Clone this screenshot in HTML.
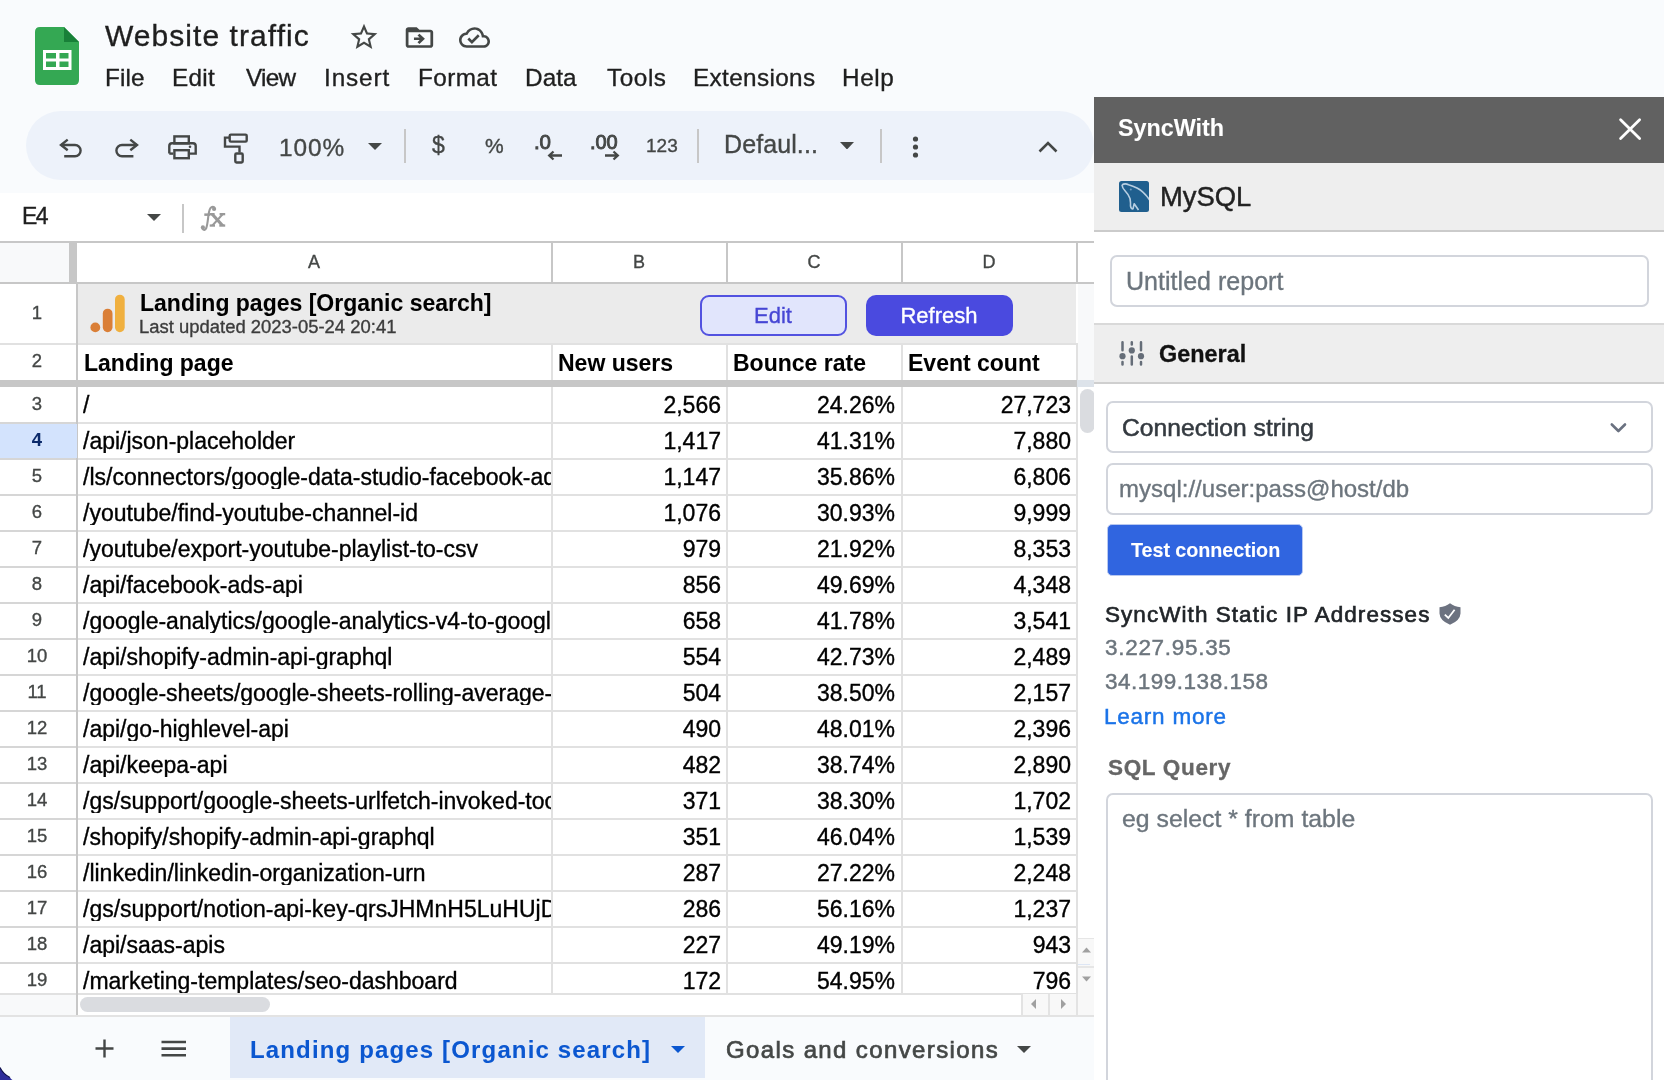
<!DOCTYPE html>
<html><head><meta charset="utf-8"><title>Website traffic</title>
<style>
html,body{margin:0;padding:0;}
body{width:1664px;height:1080px;position:relative;overflow:hidden;background:#f9fbfd;font-family:"Liberation Sans", sans-serif;}
div{will-change:transform;-webkit-text-stroke:0.35px currentColor;}
</style></head><body>
<div style="position:absolute;left:0px;top:0px;width:1664px;height:193px;background:#f9fbfd;"></div>
<div style="position:absolute;left:0px;top:193px;width:1094px;height:49px;background:#ffffff;"></div>
<div style="position:absolute;left:26px;top:111px;width:1068px;height:69px;background:#edf2fa;border-radius:35px;"></div>
<svg style="position:absolute;left:35px;top:27px" width="44" height="58" viewBox="0 0 44 58">
<path d="M0 5 Q0 0 5 0 H29 L44 15 V53 Q44 58 39 58 H5 Q0 58 0 53 Z" fill="#34a853"/>
<path d="M29 0 L44 15 H29 Z" fill="#188038"/>
<rect x="8" y="23" width="28.5" height="20" fill="#fff"/>
<rect x="11" y="26" width="10" height="5.5" fill="#34a853"/>
<rect x="24.5" y="26" width="9" height="5.5" fill="#34a853"/>
<rect x="11" y="34.5" width="10" height="5.5" fill="#34a853"/>
<rect x="24.5" y="34.5" width="9" height="5.5" fill="#34a853"/>
</svg>
<div style="position:absolute;top:20.61px;font-size:30px;line-height:30px;font-weight:400;color:#1f1f1f;white-space:nowrap;letter-spacing:1.057px;left:104.6px;">Website traffic</div>
<svg style="position:absolute;left:347.6px;top:21px" width="32" height="32" viewBox="0 0 24 24"><path fill="#444746" d="M22 9.24l-7.19-.62L12 2 9.19 8.63 2 9.24l5.46 4.73L5.82 21 12 17.27 18.18 21l-1.63-7.03L22 9.24zM12 15.4l-3.76 2.27 1-4.28-3.32-2.88 4.38-.38L12 6.1l1.71 4.04 4.38.38-3.32 2.88 1 4.28L12 15.4z"/></svg>
<svg preserveAspectRatio="none" style="position:absolute;left:402.7px;top:21.8px" width="32.9" height="31.05" viewBox="0 0 24 24"><path fill="#444746" d="M20 6h-8l-2-2H4c-1.1 0-2 .9-2 2v12c0 1.1.9 2 2 2h16c1.1 0 2-.9 2-2V8c0-1.1-.9-2-2-2zm0 12H4V8h16v10z"/><path fill="#444746" d="M11.99 9l-1.41 1.41L12.16 12H8v2h4.16l-1.59 1.59L11.99 17 16 13.01z"/></svg>
<svg style="position:absolute;left:459px;top:22px" width="31" height="31" viewBox="0 0 24 24"><path fill="#444746" d="M19.35 10.04C18.67 6.59 15.64 4 12 4 9.11 4 6.6 5.64 5.35 8.04 2.34 8.36 0 10.91 0 14c0 3.31 2.69 6 6 6h13c2.76 0 5-2.24 5-5 0-2.64-2.05-4.78-4.65-4.96zM19 18H6c-2.21 0-4-1.79-4-4 0-2.05 1.53-3.76 3.56-3.97l1.07-.11.5-.95C8.08 7.14 9.94 6 12 6c2.62 0 4.88 1.86 5.39 4.43l.3 1.5 1.53.11c1.56.1 2.78 1.41 2.78 2.96 0 1.65-1.35 3-3 3zm-9-3.82l-2.09-2.09L6.5 13.5 10 17l6.01-6.01-1.41-1.41z"/></svg>
<div style="position:absolute;top:65.73px;font-size:24.3px;line-height:24.3px;font-weight:400;color:#1f1f1f;white-space:nowrap;letter-spacing:0.13299999999999998px;left:105.0px;">File</div>
<div style="position:absolute;top:65.73px;font-size:24.3px;line-height:24.3px;font-weight:400;color:#1f1f1f;white-space:nowrap;letter-spacing:0.3px;left:171.5px;">Edit</div>
<div style="position:absolute;top:65.73px;font-size:24.3px;line-height:24.3px;font-weight:400;color:#1f1f1f;white-space:nowrap;letter-spacing:-0.7px;left:245.5px;">View</div>
<div style="position:absolute;top:65.73px;font-size:24.3px;line-height:24.3px;font-weight:400;color:#1f1f1f;white-space:nowrap;letter-spacing:0.8799999999999999px;left:323.6px;">Insert</div>
<div style="position:absolute;top:65.73px;font-size:24.3px;line-height:24.3px;font-weight:400;color:#1f1f1f;white-space:nowrap;letter-spacing:0.4px;left:417.8px;">Format</div>
<div style="position:absolute;top:65.73px;font-size:24.3px;line-height:24.3px;font-weight:400;color:#1f1f1f;white-space:nowrap;letter-spacing:0.09899999999999998px;left:525.1999999999999px;">Data</div>
<div style="position:absolute;top:65.73px;font-size:24.3px;line-height:24.3px;font-weight:400;color:#1f1f1f;white-space:nowrap;letter-spacing:0.575px;left:607.0px;">Tools</div>
<div style="position:absolute;top:65.73px;font-size:24.3px;line-height:24.3px;font-weight:400;color:#1f1f1f;white-space:nowrap;letter-spacing:0.366px;left:692.6999999999999px;">Extensions</div>
<div style="position:absolute;top:65.73px;font-size:24.3px;line-height:24.3px;font-weight:400;color:#1f1f1f;white-space:nowrap;letter-spacing:0.6px;left:842.1px;">Help</div>
<svg style="position:absolute;left:55px;top:130px" width="90" height="35" viewBox="0 0 90 35">
<path d="M12.7 9.6 L6 15 L12.7 20.2" stroke="#444746" stroke-width="2.4" fill="none" stroke-linejoin="miter"/>
<path d="M6 15 H20 A5.6 5.6 0 0 1 20 26.2 H9.2" stroke="#444746" stroke-width="2.4" fill="none"/>
<path d="M75.3 9.6 L82 15 L75.3 20.2" stroke="#444746" stroke-width="2.4" fill="none"/>
<path d="M82 15 H67 A5.6 5.6 0 0 0 67 26.2 H78.4" stroke="#444746" stroke-width="2.4" fill="none"/>
</svg>
<svg style="position:absolute;left:165px;top:130px" width="35" height="35" viewBox="0 0 35 35">
<rect x="9.4" y="6.4" width="14.4" height="7" stroke="#444746" stroke-width="2.4" fill="none"/>
<path d="M4.3 23.6 V16 Q4.3 13.3 7 13.3 H28 Q30.7 13.3 30.7 16 V23.6 H24.7" stroke="#444746" stroke-width="2.4" fill="none"/>
<path d="M8.2 23.6 H4.3" stroke="#444746" stroke-width="2.4" fill="none"/>
<rect x="9.4" y="20.2" width="14.4" height="8" stroke="#444746" stroke-width="2.4" fill="none"/>
<circle cx="25" cy="16.8" r="1.3" fill="#444746"/>
</svg>
<svg style="position:absolute;left:220px;top:130px" width="35" height="35" viewBox="0 0 35 35">
<rect x="9.7" y="4.6" width="17" height="7" rx="1.2" stroke="#444746" stroke-width="2.4" fill="none"/>
<path d="M9.7 7.6 H5 V16.6 H19.5 V22.5" stroke="#444746" stroke-width="2.4" fill="none"/>
<rect x="15.3" y="23.5" width="7.4" height="9" rx="1.2" stroke="#444746" stroke-width="2.4" fill="none"/>
</svg>
<div style="position:absolute;top:136.35px;font-size:24.4px;line-height:24.4px;font-weight:400;color:#444746;white-space:nowrap;letter-spacing:0.9px;left:279.2px;">100%</div>
<svg style="position:absolute;left:367.5px;top:142.5px" width="14" height="7" viewBox="0 0 14 7"><path d="M0 0 H14 L7.0 7 Z" fill="#444746"/></svg>
<div style="position:absolute;left:403.5px;top:128.5px;width:2px;height:34px;background:#c7c7c7;"></div>
<div style="position:absolute;top:133.53px;font-size:23px;line-height:23px;font-weight:400;color:#444746;white-space:nowrap;left:432px;">$</div>
<div style="position:absolute;top:135.22px;font-size:21px;line-height:21px;font-weight:400;color:#444746;white-space:nowrap;left:484.6px;">%</div>
<div style="position:absolute;top:131.65px;font-size:20.5px;line-height:20.5px;font-weight:400;color:#444746;white-space:nowrap;letter-spacing:-0.2px;left:533.8px;-webkit-text-stroke:0.9px currentColor;">.0</div>
<svg style="position:absolute;left:547px;top:150px" width="18" height="12" viewBox="0 0 18 12"><path d="M2 5.5 H15 M6.5 1.5 L2.2 5.5 L6.5 9.5" stroke="#444746" stroke-width="2.3" fill="none"/></svg>
<div style="position:absolute;top:132.07px;font-size:20px;line-height:20px;font-weight:400;color:#444746;white-space:nowrap;letter-spacing:-0.1px;left:589.5px;-webkit-text-stroke:0.9px currentColor;">.00</div>
<svg style="position:absolute;left:602px;top:150px" width="18" height="12" viewBox="0 0 18 12"><path d="M16 5.5 H3 M11.5 1.5 L15.8 5.5 L11.5 9.5" stroke="#444746" stroke-width="2.3" fill="none"/></svg>
<div style="position:absolute;top:136.22px;font-size:19px;line-height:19px;font-weight:400;color:#444746;white-space:nowrap;left:645.5px;">123</div>
<div style="position:absolute;left:696.5px;top:128.5px;width:2px;height:34px;background:#c7c7c7;"></div>
<div style="position:absolute;top:131.84px;font-size:25px;line-height:25px;font-weight:400;color:#444746;white-space:nowrap;letter-spacing:0.1px;left:723.7px;">Defaul...</div>
<svg style="position:absolute;left:840px;top:141.5px" width="14" height="7.5" viewBox="0 0 14 7.5"><path d="M0 0 H14 L7.0 7.5 Z" fill="#444746"/></svg>
<div style="position:absolute;left:880px;top:128.5px;width:2px;height:34px;background:#c7c7c7;"></div>
<svg style="position:absolute;left:910px;top:136px" width="12" height="22" viewBox="0 0 12 22"><circle cx="5.5" cy="3" r="2.6" fill="#444746"/><circle cx="5.5" cy="11" r="2.6" fill="#444746"/><circle cx="5.5" cy="19" r="2.6" fill="#444746"/></svg>
<svg style="position:absolute;left:1036px;top:138px" width="24" height="18" viewBox="0 0 24 18"><path d="M3.5 13.5 L12 5 L20.5 13.5" stroke="#444746" stroke-width="2.6" fill="none"/></svg>
<div style="position:absolute;top:205.13px;font-size:23px;line-height:23px;font-weight:400;color:#1f1f1f;white-space:nowrap;letter-spacing:-1.6px;left:21.5px;">E4</div>
<svg style="position:absolute;left:146.8px;top:214px" width="14" height="7" viewBox="0 0 14 7"><path d="M0 0 H14 L7.0 7 Z" fill="#444746"/></svg>
<div style="position:absolute;left:181.5px;top:204px;width:2px;height:29px;background:#c7c7c7;"></div>
<svg style="position:absolute;left:199px;top:204px" width="28" height="28" viewBox="0 0 28 28"><g fill="#999999"><path d="M3.2 24.3 Q5.6 27.6 7.3 24 Q8.3 21 9.1 14 Q9.9 6.5 11.4 4.2 Q13.3 1.8 15.6 3.6" stroke="#999999" stroke-width="2.1" fill="none"/><circle cx="3.9" cy="23.4" r="2.1"/><circle cx="15.1" cy="4.9" r="2.1"/><rect x="5.3" y="9.4" width="5.9" height="2.5"/><path d="M11.4 10.5 L15.6 10.5 L25.6 21.6 L21.4 21.6 Z"/><path d="M22 10.5 L24.8 10.5 L14.8 21.6 L12 21.6 Z"/><rect x="10.7" y="9" width="4.9" height="2.3"/><rect x="20.6" y="9" width="5.6" height="2.3"/><rect x="10.7" y="20.4" width="5.3" height="2.3"/><rect x="20.3" y="20.4" width="5.9" height="2.3"/></g></svg>
<div style="position:absolute;left:0px;top:242px;width:1094px;height:41px;background:#ffffff;"></div>
<div style="position:absolute;left:0px;top:242px;width:69px;height:41px;background:#f8f9fa;"></div>
<div style="position:absolute;left:0px;top:241px;width:1094px;height:2px;background:#c7c7c7;"></div>
<div style="position:absolute;left:0px;top:282px;width:1094px;height:2px;background:#c7c7c7;"></div>
<div style="position:absolute;left:69px;top:243px;width:8px;height:41px;background:#c7c7c7;"></div>
<div style="position:absolute;top:253.46px;font-size:18px;line-height:18px;font-weight:400;color:#444746;white-space:nowrap;left:14.25px;width:600px;text-align:center;">A</div>
<div style="position:absolute;top:253.46px;font-size:18px;line-height:18px;font-weight:400;color:#444746;white-space:nowrap;left:339.0px;width:600px;text-align:center;">B</div>
<div style="position:absolute;top:253.46px;font-size:18px;line-height:18px;font-weight:400;color:#444746;white-space:nowrap;left:514.0px;width:600px;text-align:center;">C</div>
<div style="position:absolute;top:253.46px;font-size:18px;line-height:18px;font-weight:400;color:#444746;white-space:nowrap;left:689.0px;width:600px;text-align:center;">D</div>
<div style="position:absolute;left:551px;top:243px;width:2px;height:40px;background:#c7c7c7;"></div>
<div style="position:absolute;left:726px;top:243px;width:2px;height:40px;background:#c7c7c7;"></div>
<div style="position:absolute;left:901px;top:243px;width:2px;height:40px;background:#c7c7c7;"></div>
<div style="position:absolute;left:1076px;top:243px;width:2px;height:40px;background:#c7c7c7;"></div>
<div style="position:absolute;left:0px;top:284px;width:1094px;height:59px;background:#ffffff;"></div>
<div style="position:absolute;left:77px;top:284px;width:999px;height:59px;background:#ebebeb;"></div>
<div style="position:absolute;left:0px;top:343px;width:1094px;height:2px;background:#e1e1e1;"></div>
<div style="position:absolute;left:0px;top:345px;width:1094px;height:35px;background:#ffffff;"></div>
<div style="position:absolute;left:0px;top:380px;width:1077px;height:7px;background:#c7c7c7;"></div>
<div style="position:absolute;left:1077px;top:380px;width:17px;height:7px;background:#dde3ea;"></div>
<div style="position:absolute;left:0px;top:387px;width:1094px;height:607px;background:#ffffff;"></div>
<div style="position:absolute;left:0px;top:994px;width:77px;height:21px;background:#f8f9fa;"></div>
<div style="position:absolute;left:77px;top:994px;width:1017px;height:21px;background:#ffffff;"></div>
<div style="position:absolute;left:79.5px;top:996.5px;width:190px;height:15px;background:#dadce0;border-radius:8px;"></div>
<div style="position:absolute;left:0px;top:1014.5px;width:1094px;height:2px;background:#e3e3e3;"></div>
<div style="position:absolute;left:0px;top:422px;width:1077px;height:2px;background:#e1e1e1;"></div>
<div style="position:absolute;left:0px;top:422px;width:76px;height:2px;background:#d6d6d6;"></div>
<div style="position:absolute;left:0px;top:458px;width:1077px;height:2px;background:#e1e1e1;"></div>
<div style="position:absolute;left:0px;top:458px;width:76px;height:2px;background:#d6d6d6;"></div>
<div style="position:absolute;left:0px;top:494px;width:1077px;height:2px;background:#e1e1e1;"></div>
<div style="position:absolute;left:0px;top:494px;width:76px;height:2px;background:#d6d6d6;"></div>
<div style="position:absolute;left:0px;top:530px;width:1077px;height:2px;background:#e1e1e1;"></div>
<div style="position:absolute;left:0px;top:530px;width:76px;height:2px;background:#d6d6d6;"></div>
<div style="position:absolute;left:0px;top:566px;width:1077px;height:2px;background:#e1e1e1;"></div>
<div style="position:absolute;left:0px;top:566px;width:76px;height:2px;background:#d6d6d6;"></div>
<div style="position:absolute;left:0px;top:602px;width:1077px;height:2px;background:#e1e1e1;"></div>
<div style="position:absolute;left:0px;top:602px;width:76px;height:2px;background:#d6d6d6;"></div>
<div style="position:absolute;left:0px;top:638px;width:1077px;height:2px;background:#e1e1e1;"></div>
<div style="position:absolute;left:0px;top:638px;width:76px;height:2px;background:#d6d6d6;"></div>
<div style="position:absolute;left:0px;top:674px;width:1077px;height:2px;background:#e1e1e1;"></div>
<div style="position:absolute;left:0px;top:674px;width:76px;height:2px;background:#d6d6d6;"></div>
<div style="position:absolute;left:0px;top:710px;width:1077px;height:2px;background:#e1e1e1;"></div>
<div style="position:absolute;left:0px;top:710px;width:76px;height:2px;background:#d6d6d6;"></div>
<div style="position:absolute;left:0px;top:746px;width:1077px;height:2px;background:#e1e1e1;"></div>
<div style="position:absolute;left:0px;top:746px;width:76px;height:2px;background:#d6d6d6;"></div>
<div style="position:absolute;left:0px;top:782px;width:1077px;height:2px;background:#e1e1e1;"></div>
<div style="position:absolute;left:0px;top:782px;width:76px;height:2px;background:#d6d6d6;"></div>
<div style="position:absolute;left:0px;top:818px;width:1077px;height:2px;background:#e1e1e1;"></div>
<div style="position:absolute;left:0px;top:818px;width:76px;height:2px;background:#d6d6d6;"></div>
<div style="position:absolute;left:0px;top:854px;width:1077px;height:2px;background:#e1e1e1;"></div>
<div style="position:absolute;left:0px;top:854px;width:76px;height:2px;background:#d6d6d6;"></div>
<div style="position:absolute;left:0px;top:890px;width:1077px;height:2px;background:#e1e1e1;"></div>
<div style="position:absolute;left:0px;top:890px;width:76px;height:2px;background:#d6d6d6;"></div>
<div style="position:absolute;left:0px;top:926px;width:1077px;height:2px;background:#e1e1e1;"></div>
<div style="position:absolute;left:0px;top:926px;width:76px;height:2px;background:#d6d6d6;"></div>
<div style="position:absolute;left:0px;top:962px;width:1077px;height:2px;background:#e1e1e1;"></div>
<div style="position:absolute;left:0px;top:962px;width:76px;height:2px;background:#d6d6d6;"></div>
<div style="position:absolute;left:0px;top:993px;width:1077px;height:1.5px;background:#e1e1e1;"></div>
<div style="position:absolute;left:75.8px;top:284px;width:2px;height:731px;background:#c7c7c7;"></div>
<div style="position:absolute;left:551px;top:345px;width:2px;height:35px;background:#e1e1e1;"></div>
<div style="position:absolute;left:551px;top:387px;width:2px;height:607px;background:#e1e1e1;"></div>
<div style="position:absolute;left:726px;top:345px;width:2px;height:35px;background:#e1e1e1;"></div>
<div style="position:absolute;left:726px;top:387px;width:2px;height:607px;background:#e1e1e1;"></div>
<div style="position:absolute;left:901px;top:345px;width:2px;height:35px;background:#e1e1e1;"></div>
<div style="position:absolute;left:901px;top:387px;width:2px;height:607px;background:#e1e1e1;"></div>
<div style="position:absolute;left:1076px;top:345px;width:2px;height:35px;background:#e1e1e1;"></div>
<div style="position:absolute;left:1076px;top:387px;width:2px;height:607px;background:#e1e1e1;"></div>
<div style="position:absolute;left:1078px;top:284px;width:16px;height:96px;background:#f8f9fa;"></div>
<div style="position:absolute;left:1078px;top:387px;width:16px;height:551px;background:#ffffff;"></div>
<div style="position:absolute;left:1078px;top:938.5px;width:16px;height:55px;background:#f8f8f8;"></div>
<div style="position:absolute;left:1078px;top:938px;width:16px;height:1.2px;background:#e6e6e6;"></div>
<div style="position:absolute;left:1078px;top:965.5px;width:16px;height:1.5px;background:#e6e6e6;"></div>
<div style="position:absolute;left:1078px;top:963.5px;width:12px;height:1.2px;background:#dde6f5;"></div>
<div style="position:absolute;left:1079.5px;top:389px;width:14.5px;height:44px;background:#dadce0;border-radius:8px;"></div>
<div style="position:absolute;left:0px;top:424px;width:76.5px;height:34px;background:#d3e3fd;"></div>
<div style="position:absolute;top:303.54px;font-size:18.5px;line-height:18.5px;font-weight:400;color:#444746;white-space:nowrap;left:-262.7px;width:600px;text-align:center;">1</div>
<div style="position:absolute;top:351.84px;font-size:18.5px;line-height:18.5px;font-weight:400;color:#444746;white-space:nowrap;left:-262.7px;width:600px;text-align:center;">2</div>
<div style="position:absolute;top:394.84px;font-size:18.5px;line-height:18.5px;font-weight:400;color:#444746;white-space:nowrap;left:-262.7px;width:600px;text-align:center;">3</div>
<div style="position:absolute;top:430.84px;font-size:18.5px;line-height:18.5px;font-weight:700;color:#0b2a6b;white-space:nowrap;-webkit-text-stroke:0.05px currentColor;left:-262.7px;width:600px;text-align:center;">4</div>
<div style="position:absolute;top:466.84px;font-size:18.5px;line-height:18.5px;font-weight:400;color:#444746;white-space:nowrap;left:-262.7px;width:600px;text-align:center;">5</div>
<div style="position:absolute;top:502.84px;font-size:18.5px;line-height:18.5px;font-weight:400;color:#444746;white-space:nowrap;left:-262.7px;width:600px;text-align:center;">6</div>
<div style="position:absolute;top:538.84px;font-size:18.5px;line-height:18.5px;font-weight:400;color:#444746;white-space:nowrap;left:-262.7px;width:600px;text-align:center;">7</div>
<div style="position:absolute;top:574.84px;font-size:18.5px;line-height:18.5px;font-weight:400;color:#444746;white-space:nowrap;left:-262.7px;width:600px;text-align:center;">8</div>
<div style="position:absolute;top:610.84px;font-size:18.5px;line-height:18.5px;font-weight:400;color:#444746;white-space:nowrap;left:-262.7px;width:600px;text-align:center;">9</div>
<div style="position:absolute;top:646.84px;font-size:18.5px;line-height:18.5px;font-weight:400;color:#444746;white-space:nowrap;left:-262.7px;width:600px;text-align:center;">10</div>
<div style="position:absolute;top:682.84px;font-size:18.5px;line-height:18.5px;font-weight:400;color:#444746;white-space:nowrap;left:-262.7px;width:600px;text-align:center;">11</div>
<div style="position:absolute;top:718.84px;font-size:18.5px;line-height:18.5px;font-weight:400;color:#444746;white-space:nowrap;left:-262.7px;width:600px;text-align:center;">12</div>
<div style="position:absolute;top:754.84px;font-size:18.5px;line-height:18.5px;font-weight:400;color:#444746;white-space:nowrap;left:-262.7px;width:600px;text-align:center;">13</div>
<div style="position:absolute;top:790.84px;font-size:18.5px;line-height:18.5px;font-weight:400;color:#444746;white-space:nowrap;left:-262.7px;width:600px;text-align:center;">14</div>
<div style="position:absolute;top:826.84px;font-size:18.5px;line-height:18.5px;font-weight:400;color:#444746;white-space:nowrap;left:-262.7px;width:600px;text-align:center;">15</div>
<div style="position:absolute;top:862.84px;font-size:18.5px;line-height:18.5px;font-weight:400;color:#444746;white-space:nowrap;left:-262.7px;width:600px;text-align:center;">16</div>
<div style="position:absolute;top:898.84px;font-size:18.5px;line-height:18.5px;font-weight:400;color:#444746;white-space:nowrap;left:-262.7px;width:600px;text-align:center;">17</div>
<div style="position:absolute;top:934.84px;font-size:18.5px;line-height:18.5px;font-weight:400;color:#444746;white-space:nowrap;left:-262.7px;width:600px;text-align:center;">18</div>
<div style="position:absolute;top:970.84px;font-size:18.5px;line-height:18.5px;font-weight:400;color:#444746;white-space:nowrap;left:-262.7px;width:600px;text-align:center;">19</div>
<svg style="position:absolute;left:89px;top:294px" width="38" height="40" viewBox="0 0 38 40">
<circle cx="6.3" cy="33.4" r="4.9" fill="#da7f37"/>
<rect x="13.8" y="14.7" width="9.7" height="23.5" rx="4.85" fill="#da7f37"/>
<rect x="26" y="0.7" width="9.7" height="37.5" rx="4.85" fill="#f0b03f"/>
</svg>
<div style="position:absolute;top:291.53px;font-size:23px;line-height:23px;font-weight:700;color:#000;white-space:nowrap;-webkit-text-stroke:0.05px currentColor;left:139.5px;">Landing pages [Organic search]</div>
<div style="position:absolute;top:317.68px;font-size:18.45px;line-height:18.45px;font-weight:400;color:#3c3c3c;white-space:nowrap;letter-spacing:0.003px;left:139.4px;">Last updated 2023-05-24 20:41</div>
<div style="position:absolute;left:700px;top:295px;width:143px;height:37px;border:2px solid #5252e0;border-radius:9px;background:#e1e5fc;"></div>
<div style="position:absolute;top:305.18px;font-size:22px;line-height:22px;font-weight:400;color:#4646d4;white-space:nowrap;left:472.70000000000005px;width:600px;text-align:center;">Edit</div>
<div style="position:absolute;left:866px;top:295px;width:147px;height:41px;background:#4a4adf;border-radius:10px;"></div>
<div style="position:absolute;top:305.18px;font-size:22px;line-height:22px;font-weight:400;color:#ffffff;white-space:nowrap;left:639px;width:600px;text-align:center;">Refresh</div>
<div style="position:absolute;top:351.73px;font-size:23px;line-height:23px;font-weight:700;color:#000;white-space:nowrap;-webkit-text-stroke:0.05px currentColor;left:83.5px;">Landing page</div>
<div style="position:absolute;top:351.73px;font-size:23px;line-height:23px;font-weight:700;color:#000;white-space:nowrap;-webkit-text-stroke:0.05px currentColor;left:557.5px;">New users</div>
<div style="position:absolute;top:351.73px;font-size:23px;line-height:23px;font-weight:700;color:#000;white-space:nowrap;-webkit-text-stroke:0.05px currentColor;left:732.5px;">Bounce rate</div>
<div style="position:absolute;top:351.73px;font-size:23px;line-height:23px;font-weight:700;color:#000;white-space:nowrap;-webkit-text-stroke:0.05px currentColor;left:907.5px;">Event count</div>
<div style="position:absolute;left:0;top:387px;width:1077px;height:606px;overflow:hidden;">
<div style="position:absolute;top:7.23px;font-size:23px;line-height:23px;font-weight:400;color:#000;white-space:nowrap;left:83px;width:468px;overflow:hidden;">/</div>
<div style="position:absolute;top:7.23px;font-size:23px;line-height:23px;font-weight:400;color:#000;white-space:nowrap;left:220.5px;width:500px;text-align:right;">2,566</div>
<div style="position:absolute;top:7.23px;font-size:23px;line-height:23px;font-weight:400;color:#000;white-space:nowrap;left:395px;width:500px;text-align:right;">24.26%</div>
<div style="position:absolute;top:7.23px;font-size:23px;line-height:23px;font-weight:400;color:#000;white-space:nowrap;left:570.5px;width:500px;text-align:right;">27,723</div>
<div style="position:absolute;top:43.23px;font-size:23px;line-height:23px;font-weight:400;color:#000;white-space:nowrap;left:83px;width:468px;overflow:hidden;">/api/json-placeholder</div>
<div style="position:absolute;top:43.23px;font-size:23px;line-height:23px;font-weight:400;color:#000;white-space:nowrap;left:220.5px;width:500px;text-align:right;">1,417</div>
<div style="position:absolute;top:43.23px;font-size:23px;line-height:23px;font-weight:400;color:#000;white-space:nowrap;left:395px;width:500px;text-align:right;">41.31%</div>
<div style="position:absolute;top:43.23px;font-size:23px;line-height:23px;font-weight:400;color:#000;white-space:nowrap;left:570.5px;width:500px;text-align:right;">7,880</div>
<div style="position:absolute;top:79.23px;font-size:23px;line-height:23px;font-weight:400;color:#000;white-space:nowrap;left:83px;width:468px;overflow:hidden;">/ls/connectors/google-data-studio-facebook-ads</div>
<div style="position:absolute;top:79.23px;font-size:23px;line-height:23px;font-weight:400;color:#000;white-space:nowrap;left:220.5px;width:500px;text-align:right;">1,147</div>
<div style="position:absolute;top:79.23px;font-size:23px;line-height:23px;font-weight:400;color:#000;white-space:nowrap;left:395px;width:500px;text-align:right;">35.86%</div>
<div style="position:absolute;top:79.23px;font-size:23px;line-height:23px;font-weight:400;color:#000;white-space:nowrap;left:570.5px;width:500px;text-align:right;">6,806</div>
<div style="position:absolute;top:115.23px;font-size:23px;line-height:23px;font-weight:400;color:#000;white-space:nowrap;left:83px;width:468px;overflow:hidden;">/youtube/find-youtube-channel-id</div>
<div style="position:absolute;top:115.23px;font-size:23px;line-height:23px;font-weight:400;color:#000;white-space:nowrap;left:220.5px;width:500px;text-align:right;">1,076</div>
<div style="position:absolute;top:115.23px;font-size:23px;line-height:23px;font-weight:400;color:#000;white-space:nowrap;left:395px;width:500px;text-align:right;">30.93%</div>
<div style="position:absolute;top:115.23px;font-size:23px;line-height:23px;font-weight:400;color:#000;white-space:nowrap;left:570.5px;width:500px;text-align:right;">9,999</div>
<div style="position:absolute;top:151.23px;font-size:23px;line-height:23px;font-weight:400;color:#000;white-space:nowrap;left:83px;width:468px;overflow:hidden;">/youtube/export-youtube-playlist-to-csv</div>
<div style="position:absolute;top:151.23px;font-size:23px;line-height:23px;font-weight:400;color:#000;white-space:nowrap;left:220.5px;width:500px;text-align:right;">979</div>
<div style="position:absolute;top:151.23px;font-size:23px;line-height:23px;font-weight:400;color:#000;white-space:nowrap;left:395px;width:500px;text-align:right;">21.92%</div>
<div style="position:absolute;top:151.23px;font-size:23px;line-height:23px;font-weight:400;color:#000;white-space:nowrap;left:570.5px;width:500px;text-align:right;">8,353</div>
<div style="position:absolute;top:187.23px;font-size:23px;line-height:23px;font-weight:400;color:#000;white-space:nowrap;left:83px;width:468px;overflow:hidden;">/api/facebook-ads-api</div>
<div style="position:absolute;top:187.23px;font-size:23px;line-height:23px;font-weight:400;color:#000;white-space:nowrap;left:220.5px;width:500px;text-align:right;">856</div>
<div style="position:absolute;top:187.23px;font-size:23px;line-height:23px;font-weight:400;color:#000;white-space:nowrap;left:395px;width:500px;text-align:right;">49.69%</div>
<div style="position:absolute;top:187.23px;font-size:23px;line-height:23px;font-weight:400;color:#000;white-space:nowrap;left:570.5px;width:500px;text-align:right;">4,348</div>
<div style="position:absolute;top:223.23px;font-size:23px;line-height:23px;font-weight:400;color:#000;white-space:nowrap;left:83px;width:468px;overflow:hidden;">/google-analytics/google-analytics-v4-to-google-sheets</div>
<div style="position:absolute;top:223.23px;font-size:23px;line-height:23px;font-weight:400;color:#000;white-space:nowrap;left:220.5px;width:500px;text-align:right;">658</div>
<div style="position:absolute;top:223.23px;font-size:23px;line-height:23px;font-weight:400;color:#000;white-space:nowrap;left:395px;width:500px;text-align:right;">41.78%</div>
<div style="position:absolute;top:223.23px;font-size:23px;line-height:23px;font-weight:400;color:#000;white-space:nowrap;left:570.5px;width:500px;text-align:right;">3,541</div>
<div style="position:absolute;top:259.23px;font-size:23px;line-height:23px;font-weight:400;color:#000;white-space:nowrap;left:83px;width:468px;overflow:hidden;">/api/shopify-admin-api-graphql</div>
<div style="position:absolute;top:259.23px;font-size:23px;line-height:23px;font-weight:400;color:#000;white-space:nowrap;left:220.5px;width:500px;text-align:right;">554</div>
<div style="position:absolute;top:259.23px;font-size:23px;line-height:23px;font-weight:400;color:#000;white-space:nowrap;left:395px;width:500px;text-align:right;">42.73%</div>
<div style="position:absolute;top:259.23px;font-size:23px;line-height:23px;font-weight:400;color:#000;white-space:nowrap;left:570.5px;width:500px;text-align:right;">2,489</div>
<div style="position:absolute;top:295.23px;font-size:23px;line-height:23px;font-weight:400;color:#000;white-space:nowrap;left:83px;width:468px;overflow:hidden;">/google-sheets/google-sheets-rolling-average-formula</div>
<div style="position:absolute;top:295.23px;font-size:23px;line-height:23px;font-weight:400;color:#000;white-space:nowrap;left:220.5px;width:500px;text-align:right;">504</div>
<div style="position:absolute;top:295.23px;font-size:23px;line-height:23px;font-weight:400;color:#000;white-space:nowrap;left:395px;width:500px;text-align:right;">38.50%</div>
<div style="position:absolute;top:295.23px;font-size:23px;line-height:23px;font-weight:400;color:#000;white-space:nowrap;left:570.5px;width:500px;text-align:right;">2,157</div>
<div style="position:absolute;top:331.23px;font-size:23px;line-height:23px;font-weight:400;color:#000;white-space:nowrap;left:83px;width:468px;overflow:hidden;">/api/go-highlevel-api</div>
<div style="position:absolute;top:331.23px;font-size:23px;line-height:23px;font-weight:400;color:#000;white-space:nowrap;left:220.5px;width:500px;text-align:right;">490</div>
<div style="position:absolute;top:331.23px;font-size:23px;line-height:23px;font-weight:400;color:#000;white-space:nowrap;left:395px;width:500px;text-align:right;">48.01%</div>
<div style="position:absolute;top:331.23px;font-size:23px;line-height:23px;font-weight:400;color:#000;white-space:nowrap;left:570.5px;width:500px;text-align:right;">2,396</div>
<div style="position:absolute;top:367.23px;font-size:23px;line-height:23px;font-weight:400;color:#000;white-space:nowrap;left:83px;width:468px;overflow:hidden;">/api/keepa-api</div>
<div style="position:absolute;top:367.23px;font-size:23px;line-height:23px;font-weight:400;color:#000;white-space:nowrap;left:220.5px;width:500px;text-align:right;">482</div>
<div style="position:absolute;top:367.23px;font-size:23px;line-height:23px;font-weight:400;color:#000;white-space:nowrap;left:395px;width:500px;text-align:right;">38.74%</div>
<div style="position:absolute;top:367.23px;font-size:23px;line-height:23px;font-weight:400;color:#000;white-space:nowrap;left:570.5px;width:500px;text-align:right;">2,890</div>
<div style="position:absolute;top:403.23px;font-size:23px;line-height:23px;font-weight:400;color:#000;white-space:nowrap;left:83px;width:468px;overflow:hidden;">/gs/support/google-sheets-urlfetch-invoked-too-many-times</div>
<div style="position:absolute;top:403.23px;font-size:23px;line-height:23px;font-weight:400;color:#000;white-space:nowrap;left:220.5px;width:500px;text-align:right;">371</div>
<div style="position:absolute;top:403.23px;font-size:23px;line-height:23px;font-weight:400;color:#000;white-space:nowrap;left:395px;width:500px;text-align:right;">38.30%</div>
<div style="position:absolute;top:403.23px;font-size:23px;line-height:23px;font-weight:400;color:#000;white-space:nowrap;left:570.5px;width:500px;text-align:right;">1,702</div>
<div style="position:absolute;top:439.23px;font-size:23px;line-height:23px;font-weight:400;color:#000;white-space:nowrap;left:83px;width:468px;overflow:hidden;">/shopify/shopify-admin-api-graphql</div>
<div style="position:absolute;top:439.23px;font-size:23px;line-height:23px;font-weight:400;color:#000;white-space:nowrap;left:220.5px;width:500px;text-align:right;">351</div>
<div style="position:absolute;top:439.23px;font-size:23px;line-height:23px;font-weight:400;color:#000;white-space:nowrap;left:395px;width:500px;text-align:right;">46.04%</div>
<div style="position:absolute;top:439.23px;font-size:23px;line-height:23px;font-weight:400;color:#000;white-space:nowrap;left:570.5px;width:500px;text-align:right;">1,539</div>
<div style="position:absolute;top:475.23px;font-size:23px;line-height:23px;font-weight:400;color:#000;white-space:nowrap;left:83px;width:468px;overflow:hidden;">/linkedin/linkedin-organization-urn</div>
<div style="position:absolute;top:475.23px;font-size:23px;line-height:23px;font-weight:400;color:#000;white-space:nowrap;left:220.5px;width:500px;text-align:right;">287</div>
<div style="position:absolute;top:475.23px;font-size:23px;line-height:23px;font-weight:400;color:#000;white-space:nowrap;left:395px;width:500px;text-align:right;">27.22%</div>
<div style="position:absolute;top:475.23px;font-size:23px;line-height:23px;font-weight:400;color:#000;white-space:nowrap;left:570.5px;width:500px;text-align:right;">2,248</div>
<div style="position:absolute;top:511.23px;font-size:23px;line-height:23px;font-weight:400;color:#000;white-space:nowrap;left:83px;width:468px;overflow:hidden;">/gs/support/notion-api-key-qrsJHMnH5LuHUjDsdfsf</div>
<div style="position:absolute;top:511.23px;font-size:23px;line-height:23px;font-weight:400;color:#000;white-space:nowrap;left:220.5px;width:500px;text-align:right;">286</div>
<div style="position:absolute;top:511.23px;font-size:23px;line-height:23px;font-weight:400;color:#000;white-space:nowrap;left:395px;width:500px;text-align:right;">56.16%</div>
<div style="position:absolute;top:511.23px;font-size:23px;line-height:23px;font-weight:400;color:#000;white-space:nowrap;left:570.5px;width:500px;text-align:right;">1,237</div>
<div style="position:absolute;top:547.23px;font-size:23px;line-height:23px;font-weight:400;color:#000;white-space:nowrap;left:83px;width:468px;overflow:hidden;">/api/saas-apis</div>
<div style="position:absolute;top:547.23px;font-size:23px;line-height:23px;font-weight:400;color:#000;white-space:nowrap;left:220.5px;width:500px;text-align:right;">227</div>
<div style="position:absolute;top:547.23px;font-size:23px;line-height:23px;font-weight:400;color:#000;white-space:nowrap;left:395px;width:500px;text-align:right;">49.19%</div>
<div style="position:absolute;top:547.23px;font-size:23px;line-height:23px;font-weight:400;color:#000;white-space:nowrap;left:570.5px;width:500px;text-align:right;">943</div>
<div style="position:absolute;top:583.23px;font-size:23px;line-height:23px;font-weight:400;color:#000;white-space:nowrap;left:83px;width:468px;overflow:hidden;">/marketing-templates/seo-dashboard</div>
<div style="position:absolute;top:583.23px;font-size:23px;line-height:23px;font-weight:400;color:#000;white-space:nowrap;left:220.5px;width:500px;text-align:right;">172</div>
<div style="position:absolute;top:583.23px;font-size:23px;line-height:23px;font-weight:400;color:#000;white-space:nowrap;left:395px;width:500px;text-align:right;">54.95%</div>
<div style="position:absolute;top:583.23px;font-size:23px;line-height:23px;font-weight:400;color:#000;white-space:nowrap;left:570.5px;width:500px;text-align:right;">796</div>
</div>
<svg style="position:absolute;left:1081px;top:946px" width="12" height="8" viewBox="0 0 12 8"><path d="M1 6.5 L5.5 1.5 L10 6.5 Z" fill="#a0a0a0"/></svg>
<svg style="position:absolute;left:1081px;top:975px" width="12" height="8" viewBox="0 0 12 8"><path d="M1 1.5 L5.5 6.5 L10 1.5 Z" fill="#a0a0a0"/></svg>
<div style="position:absolute;left:1021px;top:994px;width:73px;height:20.5px;background:#f8f8f8;"></div>
<div style="position:absolute;left:1020.5px;top:994px;width:1.5px;height:20.5px;background:#e3e3e3;"></div>
<div style="position:absolute;left:1048px;top:994px;width:1.5px;height:20.5px;background:#e3e3e3;"></div>
<div style="position:absolute;left:1076px;top:994px;width:1.5px;height:20.5px;background:#e3e3e3;"></div>
<svg style="position:absolute;left:1029px;top:998px" width="10" height="12" viewBox="0 0 10 12"><path d="M7 1 L2 6 L7 11 Z" fill="#a0a0a0"/></svg>
<svg style="position:absolute;left:1058px;top:998px" width="10" height="12" viewBox="0 0 10 12"><path d="M3 1 L8 6 L3 11 Z" fill="#a0a0a0"/></svg>
<div style="position:absolute;left:0px;top:1016.5px;width:1094px;height:64px;background:#f9fbfd;"></div>
<svg style="position:absolute;left:0px;top:1066px" width="20" height="14" viewBox="0 0 20 14"><path d="M0 1.5 Q3 8 10 11.5 Q11 13 12.5 14 H0 Z" fill="#2e2c9a"/><path d="M0 1.5 Q3 8 10 11.5" stroke="#10104a" stroke-width="1.2" fill="none"/></svg>
<svg style="position:absolute;left:94px;top:1038px" width="22" height="22" viewBox="0 0 22 22"><path d="M1.5 10.5 H19.5 M10.5 1.5 V19.5" stroke="#444746" stroke-width="2.4"/></svg>
<svg style="position:absolute;left:160px;top:1040px" width="28" height="18" viewBox="0 0 28 18"><path d="M1.5 2 H26 M1.5 8.6 H26 M1.5 15.2 H26" stroke="#444746" stroke-width="2.6"/></svg>
<div style="position:absolute;left:229.5px;top:1016.5px;width:475px;height:61px;background:#e1e9f7;"></div>
<div style="position:absolute;top:1037.68px;font-size:24px;line-height:24px;font-weight:700;color:#0b57d0;white-space:nowrap;letter-spacing:1.15px;-webkit-text-stroke:0.05px currentColor;left:249.6px;">Landing pages [Organic search]</div>
<svg style="position:absolute;left:670.5px;top:1046px" width="14" height="7" viewBox="0 0 14 7"><path d="M0 0 H14 L7.0 7 Z" fill="#0b57d0"/></svg>
<div style="position:absolute;top:1037.98px;font-size:24px;line-height:24px;font-weight:400;color:#444746;white-space:nowrap;letter-spacing:1.3800000000000001px;left:725.6px;-webkit-text-stroke:0.7px currentColor;">Goals and conversions</div>
<svg style="position:absolute;left:1016.5px;top:1046px" width="14" height="7" viewBox="0 0 14 7"><path d="M0 0 H14 L7.0 7 Z" fill="#444746"/></svg>
<div style="position:absolute;left:1094px;top:97px;width:570px;height:983px;background:#ffffff;"></div>
<div style="position:absolute;left:1094px;top:97px;width:570px;height:66px;background:#616161;"></div>
<div style="position:absolute;top:117.09px;font-size:23.4px;line-height:23.4px;font-weight:700;color:#ffffff;white-space:nowrap;letter-spacing:-0.04300000000000001px;-webkit-text-stroke:0.05px currentColor;left:1118.1px;">SyncWith</div>
<svg style="position:absolute;left:1614px;top:113px" width="32" height="32" viewBox="0 0 32 32"><path d="M6.6 6.8 L25.6 25.4 M25.6 6.8 L6.6 25.4" stroke="#ffffff" stroke-width="2.8" stroke-linecap="round"/></svg>
<div style="position:absolute;left:1094px;top:163px;width:570px;height:67px;background:#eeeeee;"></div>
<div style="position:absolute;left:1094px;top:230px;width:570px;height:2px;background:#cbcbcb;"></div>
<svg style="position:absolute;left:1119px;top:181px" width="30" height="31" viewBox="0 0 30 31">
<rect x="0" y="0" width="30" height="31" rx="2.5" fill="#205f8e"/>
<path d="M3 4 Q6 1.8 9.5 3.8 Q14 5 18 7 Q25 10.5 31 19.5" stroke="#b9cfe2" stroke-width="1.6" fill="none"/>
<path d="M3 4 Q3.3 7 6 9.8 Q9.5 13.5 11 17.5 Q11.8 22 11.5 25 Q12.3 28.5 14 27.8 L15.2 22.8 L19.5 29" stroke="#b9cfe2" stroke-width="1.6" fill="none" stroke-linejoin="round"/>
<circle cx="11.8" cy="8.6" r="1" fill="#6f9cc0"/>
</svg>
<div style="position:absolute;top:182.81px;font-size:27.4px;line-height:27.4px;font-weight:400;color:#222222;white-space:nowrap;left:1160px;-webkit-text-stroke:0.45px currentColor;">MySQL</div>
<div style="position:absolute;left:1109.5px;top:254.5px;width:535px;height:48px;border:2px solid #d2d5dc;border-radius:7px;background:#fff;"></div>
<div style="position:absolute;top:269.44px;font-size:25px;line-height:25px;font-weight:400;color:#6c757d;white-space:nowrap;letter-spacing:0.029px;left:1125.8px;">Untitled report</div>
<div style="position:absolute;left:1094px;top:323px;width:570px;height:2px;background:#d9d9d9;"></div>
<div style="position:absolute;left:1094px;top:325px;width:570px;height:57px;background:#eeeeee;"></div>
<div style="position:absolute;left:1094px;top:382px;width:570px;height:2px;background:#cfcfcf;"></div>
<svg style="position:absolute;left:1116px;top:338px" width="30" height="30" viewBox="0 0 30 30">
<path d="M6.5 4.3 V12.2 M6.5 24 V26.5 M15.8 4.3 V6.5 M15.8 18.5 V26.5 M25 4.3 V12.2 M25 24 V26.5" stroke="#656d78" stroke-width="2.5" stroke-linecap="round"/>
<circle cx="6.5" cy="18.2" r="3.1" fill="#656d78"/><circle cx="15.8" cy="12.4" r="3.1" fill="#656d78"/><circle cx="25" cy="18.2" r="3.1" fill="#656d78"/>
</svg>
<div style="position:absolute;top:342.79px;font-size:23.4px;line-height:23.4px;font-weight:700;color:#111111;white-space:nowrap;letter-spacing:0.017px;-webkit-text-stroke:0.05px currentColor;left:1158.5px;-webkit-text-stroke:0.3px currentColor;">General</div>
<div style="position:absolute;left:1106px;top:401px;width:542.5px;height:48px;border:2px solid #d2d5dc;border-radius:7px;background:#fff;"></div>
<div style="position:absolute;top:416.18px;font-size:24.6px;line-height:24.6px;font-weight:400;color:#343a40;white-space:nowrap;letter-spacing:0.031px;left:1122.3px;-webkit-text-stroke:0.55px currentColor;">Connection string</div>
<svg style="position:absolute;left:1606px;top:418.6px" width="24" height="18" viewBox="0 0 24 18"><path d="M5.8 5.5 L12.4 12 L19 5.5" stroke="#6a7180" stroke-width="2.6" fill="none" stroke-linecap="round" stroke-linejoin="round"/></svg>
<div style="position:absolute;left:1106px;top:462.5px;width:542.5px;height:48px;border:2px solid #d2d5dc;border-radius:7px;background:#fff;"></div>
<div style="position:absolute;top:476.68px;font-size:24px;line-height:24px;font-weight:400;color:#6c757d;white-space:nowrap;letter-spacing:0.016px;left:1118.6px;">mysql://user:pass@host/db</div>
<div style="position:absolute;left:1106.5px;top:523.8px;width:194px;height:50px;border:1.5px solid #b8c8f0;border-radius:5px;background:#3065e0;"></div>
<div style="position:absolute;top:541.24px;font-size:19.8px;line-height:19.8px;font-weight:700;color:#ffffff;white-space:nowrap;letter-spacing:-0.071px;-webkit-text-stroke:0.05px currentColor;left:1131.0px;">Test connection</div>
<div style="position:absolute;top:603.95px;font-size:22.5px;line-height:22.5px;font-weight:400;color:#212529;white-space:nowrap;letter-spacing:1.053px;left:1105.0px;-webkit-text-stroke:0.65px currentColor;">SyncWith Static IP Addresses</div>
<svg style="position:absolute;left:1439.3px;top:603px" width="23" height="23" viewBox="0 0 23 23"><path d="M11 0.3 Q6.5 3.8 0.5 4.2 V10.5 Q0.8 17.5 11 21.8 Q21.2 17.5 21.5 10.5 V4.2 Q15.5 3.8 11 0.3 Z" fill="#6c7280"/><path d="M5.8 11.6 L9.3 15 L15.6 6.8" stroke="#fff" stroke-width="1.8" fill="none"/></svg>
<div style="position:absolute;top:637.15px;font-size:22.5px;line-height:22.5px;font-weight:400;color:#6c757d;white-space:nowrap;letter-spacing:0.7000000000000001px;left:1105.0px;-webkit-text-stroke:0.45px currentColor;">3.227.95.35</div>
<div style="position:absolute;top:671.35px;font-size:22.5px;line-height:22.5px;font-weight:400;color:#6c757d;white-space:nowrap;letter-spacing:0.504px;left:1105.0px;-webkit-text-stroke:0.45px currentColor;">34.199.138.158</div>
<div style="position:absolute;top:706.15px;font-size:22.5px;line-height:22.5px;font-weight:400;color:#1a73e8;white-space:nowrap;letter-spacing:0.773px;left:1104.0px;-webkit-text-stroke:0.45px currentColor;">Learn more</div>
<div style="position:absolute;top:757.45px;font-size:22.5px;line-height:22.5px;font-weight:700;color:#666666;white-space:nowrap;letter-spacing:0.675px;-webkit-text-stroke:0.05px currentColor;left:1108.0px;-webkit-text-stroke:0.3px currentColor;">SQL Query</div>
<div style="position:absolute;left:1106px;top:793px;width:542.5px;height:320px;border:2px solid #d2d5dc;border-radius:7px;background:#fff;"></div>
<div style="position:absolute;top:807.21px;font-size:24.8px;line-height:24.8px;font-weight:400;color:#6c757d;white-space:nowrap;letter-spacing:0.014px;left:1121.9px;">eg select * from table</div>
</body></html>
